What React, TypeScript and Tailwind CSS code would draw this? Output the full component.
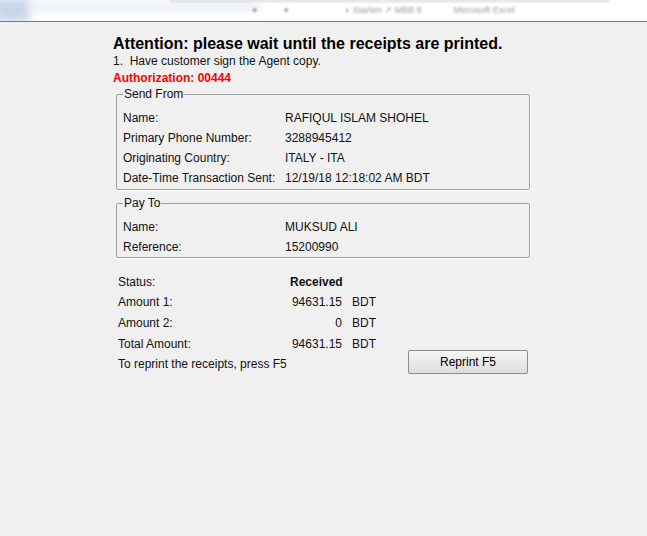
import React from 'react';

const sendFrom = [
  ['Name:', 'RAFIQUL ISLAM SHOHEL'],
  ['Primary Phone Number:', '3288945412'],
  ['Originating Country:', 'ITALY - ITA'],
  ['Date-Time Transaction Sent:', '12/19/18 12:18:02 AM BDT'],
];

const payTo = [
  ['Name:', 'MUKSUD ALI'],
  ['Reference:', '15200990'],
];

const amounts = [
  ['Amount 1:', '94631.15', 'h-[20px]'],
  ['Amount 2:', '0', 'h-[21px]'],
  ['Total Amount:', '94631.15', 'h-[21px]'],
];

function GroupBox({ title, rows, bottom }: { title: string; rows: string[][]; bottom: string }) {
  return (
    <fieldset className={`border border-[#a0a0a0] rounded-[2px] px-[6px] shadow-[1px_1px_0_#ffffff] ${bottom}`}>
      <legend className="px-[1px] leading-[14px] h-[14px]">{title}</legend>
      <div className="pt-[7px]">
        {rows.map(([label, value]) => (
          <div key={label} className="flex h-[20px] items-center">
            <span className="w-[162px] shrink-0">{label}</span>
            <span>{value}</span>
          </div>
        ))}
      </div>
    </fieldset>
  );
}

export default function App() {
  return (
    <div className="w-[647px] h-[536px] bg-[#f0f0f0] text-[12px] text-[#111] overflow-hidden" style={{ fontFamily: '"Liberation Sans", Arial, sans-serif' }}>
      {/* blurred taskbar strip */}
      <div className="h-[22px] bg-white border-b border-[#7a7a7a] relative overflow-hidden">
        <div className="absolute left-[-6px] top-[-2px] w-[36px] h-[24px] bg-[#c9d6ea] blur-[4px]" />
        <div className="absolute left-[30px] top-[2px] w-[230px] h-[8px] bg-[#e6ecf5] blur-[4px]" />
        <div className="absolute left-[170px] top-[0px] w-[440px] h-[2px] bg-[#d8d8d8] blur-[1px]" />
        <div className="flex items-center h-full pl-[252px] gap-[26px] text-[9px] text-[#9a9a9a] blur-[1.2px]">
          <span>●</span>
          <span>●</span>
          <span className="ml-[30px]">◐ Starten  ↗ MBB 8</span>
          <span className="ml-[6px]">Microsoft Excel</span>
        </div>
      </div>

      <div className="ml-[113px] w-[417px] pt-[13px]">
        <h1 className="text-[16px] font-bold leading-[18px] text-black">
          Attention: please wait until the receipts are printed.
        </h1>
        <p className="leading-[16px]">1.&nbsp; Have customer sign the Agent copy.</p>
        <p className="leading-[16px] mt-[1px] font-bold text-[#f00]">Authorization: 00444</p>

        <div className="ml-[3px] mt-[1px]">
          <GroupBox title="Send From" rows={sendFrom} bottom="pb-[1px]" />
          <div className="mt-[6px]">
            <GroupBox title="Pay To" rows={payTo} bottom="pb-[0px]" />
          </div>
        </div>

        <div className="mt-[14px] pl-[5px] pr-[2px]">
          <div className="flex h-[20px] items-center">
            <span className="w-[172px] shrink-0">Status:</span>
            <span className="font-bold">Received</span>
          </div>
          {amounts.map(([label, value, h]) => (
            <div key={label} className={`flex items-center ${h}`}>
              <span className="w-[172px] shrink-0">{label}</span>
              <span className="w-[52px] text-right">{value}</span>
              <span className="ml-[10px]">BDT</span>
            </div>
          ))}
          <div className="flex h-[24px] items-center justify-between mt-[-4px]">
            <span className="pt-[3px]">To reprint the receipts, press F5</span>
            <button className="w-[120px] h-[24px] border border-[#8c8c8c] rounded-[2px] bg-gradient-to-b from-[#f6f6f6] to-[#dddddd] text-[12px] text-black">
              Reprint F5
            </button>
          </div>
        </div>
      </div>
    </div>
  );
}
